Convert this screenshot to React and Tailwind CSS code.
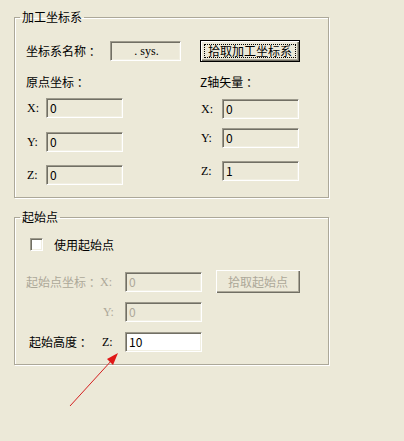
import React from "react";

const cjk = "font-['Noto_Sans_CJK_SC','Noto_Sans',sans-serif]";
const serif = "font-['Liberation_Serif','Noto_Sans_CJK_SC',serif]";

const Field = ({ value, white, disabled, className = "" }) => (
    <div
        className={`w-[77px] h-[20px] flex items-center pl-[3px] text-[12px] leading-[14px] ${cjk} border-t border-l border-b border-r border-t-[#9D9A8C] border-l-[#9D9A8C] border-b-white border-r-white shadow-[inset_1px_1px_0_#716F64,inset_-1px_-1px_0_#F1EFE2] ${white ? "bg-white" : "bg-[#ECE9D8]"} ${disabled ? "text-[#ACA899]" : "text-black"} ${className}`}
    >
        {value}
    </div>
)

const Axis = ({ children, disabled, className = "" }) => (
    <span className={`text-[12px] leading-[14px] ${serif} ${disabled ? "text-[#ACA899]" : "text-black"} ${className}`}>{children}</span>
)

const Group = ({ title, className = "", children }) => (
    <fieldset className={`m-0 p-0 pl-[11px] w-[315px] border border-[#ACA899] shadow-[inset_1px_1px_0_#fff,1px_1px_0_#fff] ${className}`}>
        <legend className={`ml-[-6px] px-[2px] text-[12px] leading-[14px] text-black ${cjk}`}>{title}</legend>
        {children}
    </fieldset>
)

export default function App() {
    return (
        <div className={`relative w-[404px] h-[441px] bg-[#ECE9D8] pl-[14px] pt-[10px] ${cjk} text-[12px] text-black`}>

            <Group title="加工坐标系" className="h-[188px]">
                <div className="flex items-center mt-[16px] h-[22px]">
                    <span className="w-[84px] leading-[14px] whitespace-nowrap">坐标系名称 ：</span>
                    <div className="w-[71px] h-[20px] flex items-center justify-center text-[12px] leading-[14px] border-t border-l border-b border-r border-t-[#9D9A8C] border-l-[#9D9A8C] border-b-white border-r-white shadow-[inset_1px_1px_0_#716F64,inset_-1px_-1px_0_#F1EFE2]">
                        <span className={`${serif} pl-[2px]`}>. sys.</span>
                    </div>
                    <button className="ml-[19px] w-[100px] h-[22px] border border-black bg-[#ECE9D8] shadow-[inset_1px_1px_0_#fff,inset_-1px_-1px_0_#716F64,inset_-2px_-2px_0_#ACA899] flex items-center justify-center p-[3px]">
                        <span className="w-full h-full flex items-center justify-center border border-dotted border-black text-[12px] leading-[14px] whitespace-nowrap">拾取加工坐标系</span>
                    </button>
                </div>

                <div className="flex">
                    <div className="w-[174px] flex flex-col">
                        <span className="mt-[13px] leading-[14px] whitespace-nowrap">原点坐标 ：</span>
                        <div className="flex items-center mt-[9px]">
                            <Axis className="w-[20px] pl-[1px]">X:</Axis>
                            <Field value="0" />
                        </div>
                        <div className="flex items-center mt-[14px]">
                            <Axis className="w-[20px] pl-[1px]">Y:</Axis>
                            <Field value="0" />
                        </div>
                        <div className="flex items-center mt-[13px]">
                            <Axis className="w-[20px] pl-[1px]">Z:</Axis>
                            <Field value="0" />
                        </div>
                    </div>
                    <div className="flex flex-col">
                        <span className="mt-[13px] leading-[14px] whitespace-nowrap">Z轴矢量 ：</span>
                        <div className="flex items-center mt-[10px]">
                            <Axis className="w-[22px] pl-[1px]">X:</Axis>
                            <Field value="0" />
                        </div>
                        <div className="flex items-center mt-[9px]">
                            <Axis className="w-[22px] pl-[1px]">Y:</Axis>
                            <Field value="0" />
                        </div>
                        <div className="flex items-center mt-[13px]">
                            <Axis className="w-[22px] pl-[1px]">Z:</Axis>
                            <Field value="1" />
                        </div>
                    </div>
                </div>
            </Group>

            <Group title="起始点" className="h-[155px] mt-[12px]">
                <div className="flex items-center mt-[14px] h-[13px]">
                    <div className="ml-[4px] w-[13px] h-[13px] bg-white border-t border-l border-b border-r border-t-[#9D9A8C] border-l-[#9D9A8C] border-b-white border-r-white shadow-[inset_1px_1px_0_#716F64,inset_-1px_-1px_0_#F1EFE2]" />
                    <span className="ml-[11px] leading-[14px] whitespace-nowrap">使用起始点</span>
                </div>

                <div className="flex items-center mt-[19px] h-[23px]">
                    <span className="w-[74px] leading-[14px] text-[#ACA899] whitespace-nowrap">起始点坐标 ：</span>
                    <Axis disabled className="w-[25px]">X:</Axis>
                    <Field value="0" disabled />
                    <button disabled className="ml-[14px] w-[84px] h-[23px] bg-[#ECE9D8] shadow-[inset_1px_1px_0_#fff,inset_-1px_-1px_0_#716F64,inset_-2px_-2px_0_#ACA899] text-[12px] leading-[14px] text-[#ACA899] whitespace-nowrap">拾取起始点</button>
                </div>

                <div className="flex items-center mt-[9px] h-[20px]">
                    <span className="w-[74px]" />
                    <Axis disabled className="w-[25px] pl-[3px]">Y:</Axis>
                    <Field value="0" disabled />
                </div>

                <div className="flex items-center mt-[10px] h-[20px]">
                    <span className="w-[74px] pl-[3px] leading-[14px] whitespace-nowrap">起始高度 ：</span>
                    <Axis className="w-[25px] pl-[2px]">Z:</Axis>
                    <Field value="10" white />
                </div>
            </Group>

            {/* annotation arrow */}
            <svg className="absolute left-0 top-0 pointer-events-none" width="404" height="441">
                <line x1="70" y1="406" x2="112" y2="360" stroke="#d42020" strokeWidth="1" />
                <polygon points="118,353 113,365 107,359" fill="#e01818" />
            </svg>
        </div>
    )
}
